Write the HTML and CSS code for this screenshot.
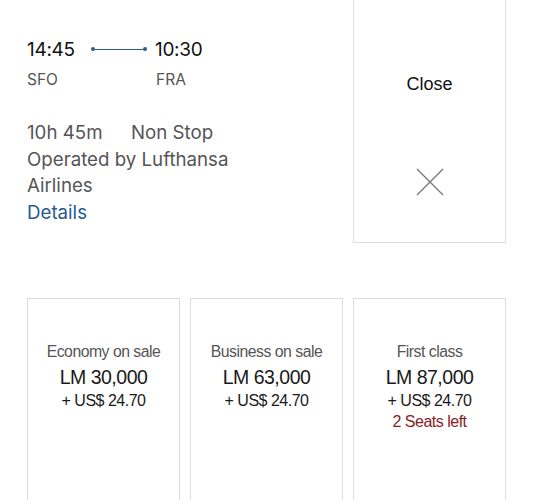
FILE: index.html
```html
<!DOCTYPE html>
<html>
<head>
<meta charset="utf-8">
<link rel="stylesheet" href="styles.css">
</head>
<body>
<div class="top">
  <div class="flight">
    <div class="times">
      <span class="time">14:45</span>
      <span class="route"><span class="dot"></span><span class="bar"></span><span class="dot"></span></span>
      <span class="time">10:30</span>
    </div>
    <div class="airports">
      <span class="ap">SFO</span>
      <span class="ap ap2">FRA</span>
    </div>
    <div class="info">
      <div><span class="dur">10h 45m</span><span>Non Stop</span></div>
      <div>Operated by Lufthansa</div>
      <div>Airlines</div>
      <a class="details" href="#">Details</a>
    </div>
  </div>
  <div class="close-card">
    <div class="close-label">Close</div>
    <svg class="x-icon" width="28" height="28" viewBox="0 0 28 28"><path d="M1 1 L27 27 M27 1 L1 27" stroke="#7a7a7a" stroke-width="1.4" fill="none"/></svg>
  </div>
</div>
<div class="fares">
  <div class="fare">
    <div class="cls">Economy on sale</div>
    <div class="miles">LM 30,000</div>
    <div class="cash">+ US$ 24.70</div>
  </div>
  <div class="fare">
    <div class="cls">Business on sale</div>
    <div class="miles">LM 63,000</div>
    <div class="cash">+ US$ 24.70</div>
  </div>
  <div class="fare">
    <div class="cls">First class</div>
    <div class="miles">LM 87,000</div>
    <div class="cash">+ US$ 24.70</div>
    <div class="seats">2 Seats left</div>
  </div>
</div>
</body>
</html>
```

FILE: styles.css
```css
html, body {
  margin: 0;
  padding: 0;
  background: #fff;
  overflow: hidden;
}
body {
  width: 533px;
  height: 500px;
  font-family: "Inter", "Noto Sans", sans-serif;
}
.top {
  display: flex;
  padding-left: 27px;
}
.flight {
  width: 326px;
  padding-top: 38px;
}
.times {
  display: flex;
  align-items: center;
  height: 22px;
}
.time {
  font-size: 19px;
  color: #111;
  letter-spacing: -0.3px;
  width: 65px;
}
.route {
  display: flex;
  align-items: center;
  width: 64px;
  margin-left: -1px;
}
.dot {
  width: 4px;
  height: 4px;
  border-radius: 50%;
  background: #2e5a8c;
}
.bar {
  width: 48px;
  height: 1px;
  background: #2e5a8c;
}
.airports {
  display: flex;
  margin-top: 10px;
  font-size: 15.5px;
  color: #555;
}
.ap {
  width: 129px;
}
.info {
  margin-top: 31px;
  font-size: 18.7px;
  line-height: 26.7px;
  color: #555;
}
.dur {
  display: inline-block;
  width: 104px;
}
.details {
  color: #255a92;
  text-decoration: none;
}
.close-card {
  width: 151px;
  height: 242px;
  border: 1.5px solid #dcdcdc;
  border-top: none;
  display: flex;
  flex-direction: column;
  align-items: center;
}
.close-label {
  margin-top: 74px;
  font-family: "Liberation Sans", Arial, sans-serif;
  font-size: 18px;
  color: #111;
}
.x-icon {
  margin-top: 73px;
}
.fares {
  display: flex;
  gap: 10px;
  padding-left: 27px;
  margin-top: 55px;
}
.fare {
  width: 151px;
  height: 220px;
  border: 1.5px solid #dcdcdc;
  text-align: center;
  font-family: "Liberation Sans", Arial, sans-serif;
  letter-spacing: -0.5px;
  padding-top: 42px;
}
.cls {
  font-size: 15.8px;
  color: #555;
  line-height: 22px;
}
.miles {
  font-size: 19.5px;
  color: #1a1a1a;
  line-height: 26px;
  margin-top: 1px;
}
.cash {
  font-size: 16px;
  color: #1a1a1a;
  line-height: 21px;
}
.seats {
  font-size: 16px;
  color: #8a1c24;
  line-height: 22px;
}
```
